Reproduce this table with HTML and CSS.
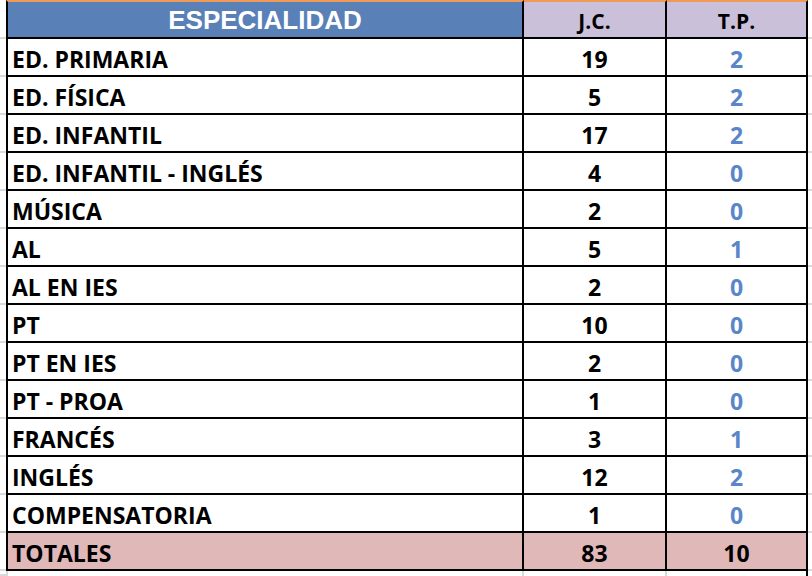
FILE: index.html
```html
<!DOCTYPE html>
<html lang="es">
<head>
<meta charset="utf-8">
<title>Especialidad</title>
<link rel="stylesheet" href="styles.css">
</head>
<body>
<div class="sheet">
  <div class="row head">
    <div class="g"></div>
    <div class="c name hd-blue">ESPECIALIDAD</div>
    <div class="c num hd-purple">J.C.</div>
    <div class="c num hd-purple">T.P.</div>
    <div class="g"></div>
  </div>
  <div class="row"><div class="g"></div><div class="c name">ED. PRIMARIA</div><div class="c num">19</div><div class="c num tp">2</div><div class="g"></div></div>
  <div class="row"><div class="g"></div><div class="c name">ED. FÍSICA</div><div class="c num">5</div><div class="c num tp">2</div><div class="g"></div></div>
  <div class="row"><div class="g"></div><div class="c name">ED. INFANTIL</div><div class="c num">17</div><div class="c num tp">2</div><div class="g"></div></div>
  <div class="row"><div class="g"></div><div class="c name">ED. INFANTIL - INGLÉS</div><div class="c num">4</div><div class="c num tp">0</div><div class="g"></div></div>
  <div class="row"><div class="g"></div><div class="c name">MÚSICA</div><div class="c num">2</div><div class="c num tp">0</div><div class="g"></div></div>
  <div class="row"><div class="g"></div><div class="c name">AL</div><div class="c num">5</div><div class="c num tp">1</div><div class="g"></div></div>
  <div class="row"><div class="g"></div><div class="c name">AL EN IES</div><div class="c num">2</div><div class="c num tp">0</div><div class="g"></div></div>
  <div class="row"><div class="g"></div><div class="c name">PT</div><div class="c num">10</div><div class="c num tp">0</div><div class="g"></div></div>
  <div class="row"><div class="g"></div><div class="c name">PT EN IES</div><div class="c num">2</div><div class="c num tp">0</div><div class="g"></div></div>
  <div class="row"><div class="g"></div><div class="c name">PT - PROA</div><div class="c num">1</div><div class="c num tp">0</div><div class="g"></div></div>
  <div class="row"><div class="g"></div><div class="c name">FRANCÉS</div><div class="c num">3</div><div class="c num tp">1</div><div class="g"></div></div>
  <div class="row"><div class="g"></div><div class="c name">INGLÉS</div><div class="c num">12</div><div class="c num tp">2</div><div class="g"></div></div>
  <div class="row"><div class="g"></div><div class="c name">COMPENSATORIA</div><div class="c num">1</div><div class="c num tp">0</div><div class="g"></div></div>
  <div class="row total"><div class="g"></div><div class="c name">TOTALES</div><div class="c num">83</div><div class="c num">10</div><div class="g"></div></div>
  <div class="row tail"><div class="g"></div><div class="t tl"></div><div class="t"></div><div class="t tr"></div><div class="g0"></div></div>
</div>
</body>
</html>
```

FILE: styles.css
```css
* { box-sizing: border-box; }
html, body { margin: 0; padding: 0; background: #fff; }
body { width: 812px; height: 576px; overflow: hidden; }

.sheet { display: flex; flex-direction: column; }

.row {
  display: grid;
  grid-template-columns: 6px 518px 143px 141px 4px;
  height: 38px;
}
.row.head { height: 39px; }
.row.tail { height: 5px; }

.g { border-bottom: 2px solid #d9d9d9; }
.g0 { }

.c {
  display: flex;
  align-items: center;
  padding-top: 3px;
  border-right: 2px solid #000;
  border-bottom: 2px solid #000;
  font-family: "Open Sans", "Liberation Sans", sans-serif;
  font-weight: 700;
  font-size: 23px;
  color: #000;
  white-space: nowrap;
}
.name { border-left: 2px solid #000; padding-left: 4px; }
.num { justify-content: center; }
.tp { color: #5a86c9; }

.head .c { border-top: 2px solid #ef9b57; padding-top: 2px; }
.hd-blue {
  background: #5a80b8;
  justify-content: center;
  padding-left: 0;
  font-family: "Liberation Sans", Arial, sans-serif;
  font-size: 26px;
  color: #fff;
}
.hd-purple { background: #cbc0da; font-size: 21px; padding-top: 5px; }

.total .c { background: #e0b8b8; }

.t { border-right: 2px solid #d9d9d9; }
.tl { border-left: 2px solid #d9d9d9; }
.tr { border-right-color: #000; }
```
